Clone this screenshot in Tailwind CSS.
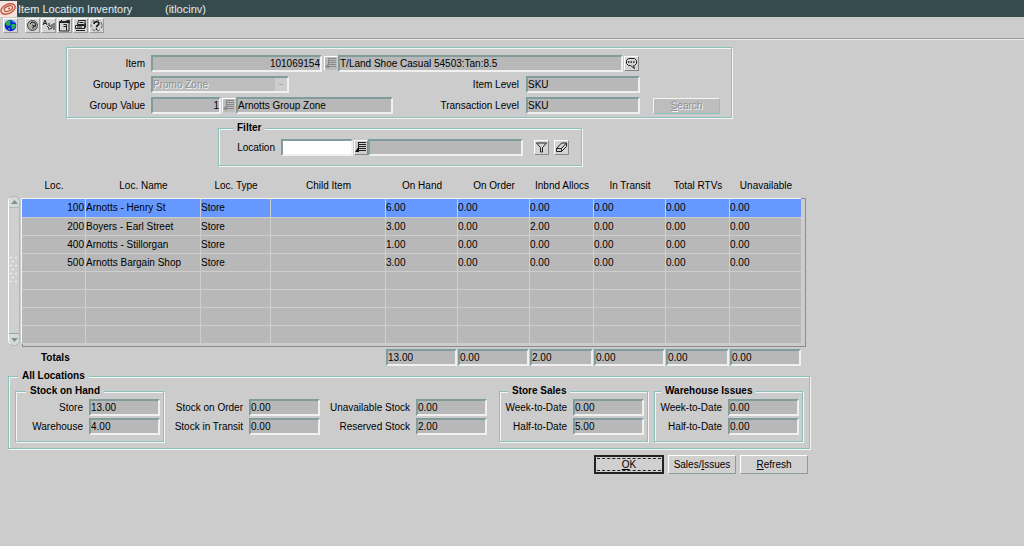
<!DOCTYPE html>
<html lang="en">
<head>
<meta charset="utf-8">
<title>Item Location Inventory</title>
<script src="https://cdn.jsdelivr.net/npm/@tailwindcss/browser@4"></script>
</head>
<body class="min-h-screen bg-[#cccccc] font-['Liberation_Sans',Arial,sans-serif] text-[10px] leading-3 text-black">

<header class="flex h-[17px] items-center bg-[#364b4e] text-[11px] text-[#e6eaea]">
  <svg class="mr-px h-4 w-[17px]" viewBox="0 0 17 16" aria-hidden="true"><rect width="17" height="16" fill="#f6e3dc"/><g fill="none" stroke="#c2543f"><ellipse cx="8" cy="8" rx="7.5" ry="4.6" transform="rotate(-25 8 8)" stroke-width="1.4"/><ellipse cx="8.5" cy="7.8" rx="4.4" ry="2.4" transform="rotate(-25 8 8)" stroke-width="1.3"/></g><circle cx="9" cy="7.6" r="1" fill="#c2543f"/></svg>
  <h1 class="w-[147px]">Item Location Inventory</h1><span>(itlocinv)</span>
</header>

<nav aria-label="Toolbar" class="flex h-[22px] items-start gap-px border-b border-[#999999] pt-px pl-[3px] shadow-[0_1px_0_#e8e8e8]">
  <button aria-label="Exit" class="mr-[6px] size-[15px] border border-t-white border-r-[#999999] border-b-[#999999] border-l-white bg-[#d4d4d4]"><svg viewBox="0 0 13 13"><circle cx="6.5" cy="6.5" r="5.8" fill="#1420d8"/><path d="M2 3l3-2 2 1-1 2 1 2-3 1-2-1zM8 5l3 0 1 2-2 3-2 0-1-3zM4 9l2 0 0 2-2-1z" fill="#1fae5a"/><path d="M7 1l3 1 1 2-2-1z" fill="#36d0e8"/></svg></button>
  <button aria-label="World" class="size-[15px] border border-t-white border-r-[#999999] border-b-[#999999] border-l-white bg-[#d4d4d4]"><svg viewBox="0 0 13 13" fill="none" stroke="#222"><circle cx="6.5" cy="6.5" r="5" fill="#aaa" stroke="#444"/><path d="M4 5l2-2 3 1 1 2-2 1-2-1M7 10V8l3-1"/></svg></button>
  <button aria-label="Translate" class="size-[15px] border border-t-white border-r-[#999999] border-b-[#999999] border-l-white bg-[#d4d4d4]"><svg viewBox="0 0 13 13" fill="none" stroke="#222"><path d="M1 6l2-5 2 5M2 4.500h2M5 7l2 2M7 4v3h2M8 10l2-1 0-4M12 4v7M6 10h2"/></svg></button>
  <button aria-label="Copy details" class="size-[15px] border border-t-white border-r-[#999999] border-b-[#999999] border-l-white bg-[#d4d4d4]"><svg viewBox="0 0 13 13" fill="none" stroke="#222"><path d="M1.500 2.500h9.500v9.500h-9.500zM1 3.500h10M3.500 1v2M5.500 5.500h3v6M5.500 7.500h3" /><path d="M8.500 1.500h3v3"/></svg></button>
  <button aria-label="Print" class="size-[15px] border border-t-white border-r-[#999999] border-b-[#999999] border-l-white bg-[#d4d4d4]"><svg viewBox="0 0 13 13" fill="none" stroke="#222"><path d="M4.500 1.500h7l-1 4h-7zM5.500 3.500h4M1.500 6.500h9v3h-9zM2 11.500h9M10.500 6.500l1-2v4l-1 1M3 8h5"/></svg></button>
  <button aria-label="Help" class="size-[15px] border border-t-white border-r-[#999999] border-b-[#999999] border-l-white bg-[#d4d4d4]"><svg viewBox="0 0 13 13" fill="none" stroke="#111"><circle cx="6.500" cy="6.500" r="5.500" stroke="#555" stroke-dasharray="3 2"/><path d="M4 5c0-3 5-3 5-.5C9 6.500 6.500 6 6.500 8.200" stroke-width="1.500"/><path d="M6.500 9.500v1.500" stroke-width="1.500"/></svg></button>
</nav>

<main class="max-w-[810px] pl-2">
  <section aria-label="Item" class="mt-2 mr-[78px] ml-[58px] flex flex-col gap-1 border border-[#8cc0bb] pt-[7px] pb-[3px] shadow-[1px_1px_0_#f4f4f4,inset_1px_1px_0_#f4f4f4]">
    <div class="flex h-[17px] items-center">
      <label for="item" class="w-[78px] text-right">Item</label>
      <input id="item" readonly value="101069154" class="ml-[6px] h-[17px] w-[171px] border-2 border-t-[#7f9d9b] border-r-[#f0f0f0] border-b-[#f0f0f0] border-l-[#7f9d9b] bg-[#b8b8b8] text-right">
      <button aria-label="List items" class="ml-[2px] h-[15px] w-[14px] border border-t-white border-r-[#cccccc] border-b-[#cccccc] border-l-white bg-[#bbbbbb]"><svg viewBox="0 0 12 13" fill="none" stroke="#888"><path d="M4 1.500h7M4 3.500h7M4 5.500h7M4 7.500h7M4 9.500h7M3.500 1v10"/><path d="M0 10l4-4v5z" fill="#888" stroke="none"/></svg></button>
      <input aria-label="Item description" readonly value="T/Land Shoe Casual 54503:Tan:8.5" class="h-[17px] w-[285px] border-2 border-t-[#7f9d9b] border-r-[#f0f0f0] border-b-[#f0f0f0] border-l-[#7f9d9b] bg-[#b8b8b8]">
      <button aria-label="Comments" class="ml-px size-[15px] border border-t-white border-r-[#888888] border-b-[#888888] border-l-white bg-[#d4d4d4]"><svg viewBox="0 0 13 13" fill="none" stroke="#222"><path d="M3.500 1.500h6l2 2v3l-2 2h-1l1 3-4-3h-2l-2-2v-3z"/><path d="M3 5h7" stroke-width="1.500" stroke-dasharray="1.500 1"/></svg></button>
    </div>
    <div class="flex h-[17px] items-center">
      <label for="gtype" class="w-[78px] text-right">Group Type</label>
      <div class="relative ml-[6px] w-[138px]">
        <select id="gtype" disabled class="block h-[17px] w-full appearance-none rounded-none border-2 border-t-[#7f9d9b] border-r-[#f0f0f0] border-b-[#f0f0f0] border-l-[#7f9d9b] bg-[#bdbdbd] text-[#8f8f8f] opacity-100 [text-shadow:1px_1px_0_#f4f4f4]"><option>Promo Zone</option></select>
        <span class="pointer-events-none absolute top-[2px] right-[2px] flex h-[13px] w-3 items-center justify-center bg-[#cccccc]"><span class="h-px w-1 bg-[#aaaaaa]"></span></span>
      </div>
      <label for="ilevel" class="w-[230px] text-right">Item Level</label>
      <input id="ilevel" readonly value="SKU" class="ml-[7px] h-[17px] w-[114px] border-2 border-t-[#7f9d9b] border-r-[#f0f0f0] border-b-[#f0f0f0] border-l-[#7f9d9b] bg-[#b8b8b8]">
    </div>
    <div class="flex h-[17px] items-center">
      <label for="gvalue" class="w-[78px] text-right">Group Value</label>
      <input id="gvalue" readonly value="1" class="ml-[6px] h-[17px] w-[70px] border-2 border-t-[#7f9d9b] border-r-[#f0f0f0] border-b-[#f0f0f0] border-l-[#7f9d9b] bg-[#b8b8b8] text-right">
      <button aria-label="List group values" class="ml-px h-[15px] w-[14px] border border-t-white border-r-[#cccccc] border-b-[#cccccc] border-l-white bg-[#bbbbbb]"><svg viewBox="0 0 12 13" fill="none" stroke="#888"><path d="M4 1.500h7M4 3.500h7M4 5.500h7M4 7.500h7M4 9.500h7M3.500 1v10"/><path d="M0 10l4-4v5z" fill="#888" stroke="none"/></svg></button>
      <input aria-label="Group value name" readonly value="Arnotts Group Zone" class="h-[17px] w-[157px] border-2 border-t-[#7f9d9b] border-r-[#f0f0f0] border-b-[#f0f0f0] border-l-[#7f9d9b] bg-[#b8b8b8]">
      <label for="tlevel" class="w-[126px] text-right">Transaction Level</label>
      <input id="tlevel" readonly value="SKU" class="ml-[7px] h-[17px] w-[114px] border-2 border-t-[#7f9d9b] border-r-[#f0f0f0] border-b-[#f0f0f0] border-l-[#7f9d9b] bg-[#b8b8b8]">
      <button disabled class="ml-[13px] h-4 w-[67px] border border-t-[#f4f4f4] border-r-[#8cc0bb] border-b-[#8cc0bb] border-l-[#f4f4f4] bg-[#bdbdbd] text-[#8f8f8f] [text-shadow:1px_1px_0_#f4f4f4]"><span class="underline">S</span>earch</button>
    </div>
  </section>

  <fieldset class="mt-1 ml-[210px] w-[364px] border border-[#8cc0bb] pb-[9px] shadow-[1px_1px_0_#f4f4f4,inset_1px_1px_0_#f4f4f4]">
    <legend class="ml-[14px] bg-[#cccccc] px-1 font-bold">Filter</legend>
    <div class="mt-[5px] flex h-[17px] items-center">
      <label for="loc" class="w-[56px] text-right">Location</label>
      <input id="loc" class="ml-[6px] h-[17px] w-[72px] border-2 border-t-[#7f9d9b] border-r-[#f0f0f0] border-b-[#f0f0f0] border-l-[#7f9d9b] bg-white">
      <button aria-label="List locations" class="ml-px h-[15px] w-[14px] border border-t-white border-r-[#888888] border-b-[#888888] border-l-white bg-[#cccccc]"><svg viewBox="0 0 12 13" fill="none" stroke="#222"><path d="M4 1.500h7M4 3.500h7M4 5.500h7M4 7.500h7M4 9.500h7M3.500 1v10"/><path d="M0 11l4-6v6z" fill="#111" stroke="none"/></svg></button>
      <input aria-label="Location name" readonly class="h-[17px] w-[155px] border-2 border-t-[#7f9d9b] border-r-[#f0f0f0] border-b-[#f0f0f0] border-l-[#7f9d9b] bg-[#b8b8b8]">
      <button aria-label="Apply filter" class="ml-[11px] size-[15px] border border-t-white border-r-[#888888] border-b-[#888888] border-l-white bg-[#d4d4d4]"><svg viewBox="0 0 13 13" fill="none" stroke="#222"><path d="M1.500 2h10L7.500 6.500v4.500h-2V6.500z"/></svg></button>
      <button aria-label="Clear filter" class="ml-[5px] size-[15px] border border-t-white border-r-[#888888] border-b-[#888888] border-l-white bg-[#d4d4d4]"><svg viewBox="0 0 13 13" fill="none" stroke="#222"><path d="M1.500 7.500l5-5.500h5l-5 5.500zM1.500 7.500v3h5v-3M6.500 10.500l5-5V2"/></svg></button>
    </div>
  </fieldset>

  <div class="mt-[14px] flex">
    <div aria-hidden="true" class="mt-[16px] mb-[20px] flex w-3 flex-col justify-between rounded-md border border-[#a9bcbc] border-l-white bg-[#cfcfcf]">
      <span class="flex h-[11px] items-center justify-center rounded-t-md border-b border-[#a9bcbc] bg-[#d4dada]"><svg class="h-1 w-[7px]" viewBox="0 0 7 4"><path d="M0 4l3.500-4L7 4z" fill="#7f9090"/></svg></span>
      <svg class="h-[30px] w-[10px]" viewBox="0 0 10 30"><g fill="#f4f4f4"><path d="M1 1h2v1H1zM6 1h2v1H6zM3 5h2v1H3zM1 9h2v1H1zM6 9h2v1H6zM3 13h2v1H3zM1 17h2v1H1zM6 17h2v1H6zM3 21h2v1H3zM1 25h2v1H1zM6 25h2v1H6z"/></g></svg>
      <span class="flex h-[12px] items-center justify-center rounded-b-md border-t border-[#8fa8a8] bg-[#d4dada]"><svg class="h-1 w-[7px]" viewBox="0 0 7 4"><path d="M0 0l3.500 4L7 0z" fill="#7f9090"/></svg></span>
    </div>
    <table class="ml-[2px] w-[780px] table-fixed border-separate border-spacing-0">
      <colgroup><col class="w-[64px]"><col class="w-[115px]"><col class="w-[70px]"><col class="w-[115px]"><col class="w-[72px]"><col class="w-[72px]"><col class="w-[64px]"><col class="w-[72px]"><col class="w-[64px]"><col class="w-[72px]"></colgroup>
      <thead><tr class="h-[19px] align-top [&>th]:font-normal [&>th]:whitespace-nowrap"><th>Loc.</th><th>Loc. Name</th><th>Loc. Type</th><th>Child Item</th><th>On Hand</th><th>On Order</th><th>Inbnd Allocs</th><th>In Transit</th><th>Total RTVs</th><th>Unavailable</th></tr></thead>
      <tbody class="bg-[#b8b8b8] shadow-[-1px_-1px_0_#f4f4f4,2px_1px_0_1px_#cccccc,2px_1px_0_2px_#8c8c8c] [&_td]:h-[18px] [&_td]:border-r [&_td]:border-b [&_td]:border-[#cecece] [&_td]:pr-px [&_td]:whitespace-nowrap">
        <tr class="h-[19px] bg-[#6699ff]"><td class="text-right">100</td><td>Arnotts - Henry St</td><td>Store</td><td></td><td>6.00</td><td>0.00</td><td>0.00</td><td>0.00</td><td>0.00</td><td>0.00</td></tr>
        <tr><td class="text-right">200</td><td>Boyers - Earl Street</td><td>Store</td><td></td><td>3.00</td><td>0.00</td><td>2.00</td><td>0.00</td><td>0.00</td><td>0.00</td></tr>
        <tr><td class="text-right">400</td><td>Arnotts - Stillorgan</td><td>Store</td><td></td><td>1.00</td><td>0.00</td><td>0.00</td><td>0.00</td><td>0.00</td><td>0.00</td></tr>
        <tr><td class="text-right">500</td><td>Arnotts Bargain Shop</td><td>Store</td><td></td><td>3.00</td><td>0.00</td><td>0.00</td><td>0.00</td><td>0.00</td><td>0.00</td></tr>
        <tr><td></td><td></td><td></td><td></td><td></td><td></td><td></td><td></td><td></td><td></td></tr>
        <tr><td></td><td></td><td></td><td></td><td></td><td></td><td></td><td></td><td></td><td></td></tr>
        <tr><td></td><td></td><td></td><td></td><td></td><td></td><td></td><td></td><td></td><td></td></tr>
        <tr><td></td><td></td><td></td><td></td><td></td><td></td><td></td><td></td><td></td><td></td></tr>
      </tbody>
      <tfoot><tr class="[&>td]:pt-[5px] [&>td]:pr-px [&_input]:block [&_input]:h-[17px] [&_input]:w-full [&_input]:border-2 [&_input]:border-t-[#7f9d9b] [&_input]:border-r-[#f0f0f0] [&_input]:border-b-[#f0f0f0] [&_input]:border-l-[#7f9d9b] [&_input]:bg-[#b8b8b8]"><th colspan="4" class="pt-[5px] pl-[19px] text-left font-bold">Totals</th>
        <td><input aria-label="Total on hand" readonly value="13.00"></td><td><input aria-label="Total on order" readonly value="0.00"></td><td><input aria-label="Total inbound allocs" readonly value="2.00"></td><td><input aria-label="Total in transit" readonly value="0.00"></td><td><input aria-label="Total RTVs" readonly value="0.00"></td><td><input aria-label="Total unavailable" readonly value="0.00"></td></tr></tfoot>
    </table>
  </div>

  <fieldset class="mt-1 border border-[#8cc0bb] pt-[3px] pb-[6px] shadow-[1px_1px_0_#f4f4f4,inset_1px_1px_0_#f4f4f4] [&_input]:h-[17px] [&_input]:w-[71px] [&_input]:border-2 [&_input]:border-t-[#7f9d9b] [&_input]:border-r-[#f0f0f0] [&_input]:border-b-[#f0f0f0] [&_input]:border-l-[#7f9d9b] [&_input]:bg-[#b8b8b8] [&_label]:whitespace-nowrap [&_legend]:bg-[#cccccc]">
    <legend class="ml-[9px] px-1 font-bold">All Locations</legend>
    <div class="flex items-end pl-[6px]">
      <fieldset class="w-[149px] border border-[#8cc0bb] pb-[6px] shadow-[1px_1px_0_#f4f4f4,inset_1px_1px_0_#f4f4f4]">
        <legend class="ml-[10px] px-1 font-bold">Stock on Hand</legend>
        <div class="mt-[2px] grid grid-cols-[67px_71px] items-center gap-x-[6px] gap-y-[2px] text-right">
          <label for="s1">Store</label><input id="s1" readonly value="13.00">
          <label for="s2">Warehouse</label><input id="s2" readonly value="4.00">
        </div>
      </fieldset>
      <div class="mb-[7px] ml-[5px] grid grid-cols-[74px_71px] items-center gap-x-[6px] gap-y-[2px] text-right">
        <label for="s3">Stock on Order</label><input id="s3" readonly value="0.00">
        <label for="s4">Stock in Transit</label><input id="s4" readonly value="0.00">
      </div>
      <div class="mb-[7px] ml-[8px] grid grid-cols-[82px_71px] items-center gap-x-[6px] gap-y-[2px] text-right">
        <label for="s5">Unavailable Stock</label><input id="s5" readonly value="0.00">
        <label for="s6">Reserved Stock</label><input id="s6" readonly value="2.00">
      </div>
      <fieldset class="ml-3 w-[149px] border border-[#8cc0bb] pb-[6px] shadow-[1px_1px_0_#f4f4f4,inset_1px_1px_0_#f4f4f4]">
        <legend class="ml-[8px] px-1 font-bold">Store Sales</legend>
        <div class="mt-[2px] grid grid-cols-[67px_71px] items-center gap-x-[6px] gap-y-[2px] text-right">
          <label for="s7">Week-to-Date</label><input id="s7" readonly value="0.00">
          <label for="s8">Half-to-Date</label><input id="s8" readonly value="5.00">
        </div>
      </fieldset>
      <fieldset class="ml-[6px] w-[149px] border border-[#8cc0bb] pb-[6px] shadow-[1px_1px_0_#f4f4f4,inset_1px_1px_0_#f4f4f4]">
        <legend class="ml-[6px] px-1 font-bold">Warehouse Issues</legend>
        <div class="mt-[2px] grid grid-cols-[67px_71px] items-center gap-x-[6px] gap-y-[2px] text-right">
          <label for="s9">Week-to-Date</label><input id="s9" readonly value="0.00">
          <label for="s10">Half-to-Date</label><input id="s10" readonly value="0.00">
        </div>
      </fieldset>
    </div>
  </fieldset>

  <div class="mt-[6px] flex justify-end gap-1 pr-[2px]">
    <button class="h-[19px] w-[70px] border-2 border-[#222222] bg-[#d0d0d0] p-px"><span class="block border-y border-dashed border-[#222222] leading-[11px]"><span class="underline">O</span>K</span></button>
    <button class="h-[19px] w-[68px] border border-t-white border-r-[#8c9c9c] border-b-[#8c9c9c] border-l-white bg-[#d0d0d0]">Sales/<span class="underline">I</span>ssues</button>
    <button class="h-[19px] w-[68px] border border-t-white border-r-[#8c9c9c] border-b-[#8c9c9c] border-l-white bg-[#d0d0d0]"><span class="underline">R</span>efresh</button>
  </div>
</main>
</body>
</html>
